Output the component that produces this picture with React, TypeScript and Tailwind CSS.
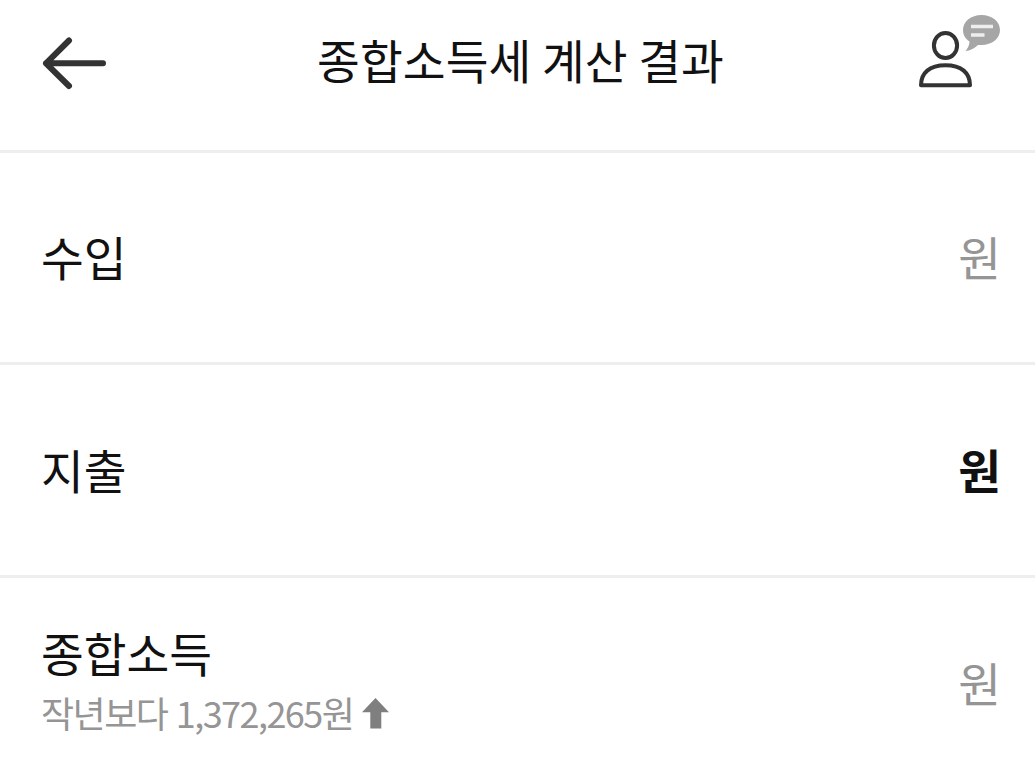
const BackIcon = () => (
  <svg width="66" height="54" viewBox="0 0 66 54" fill="none">
    <path
      d="M28 4.500L5 27.300L28 50M5 27.300H62"
      stroke="#333333"
      strokeWidth="6"
      strokeLinecap="round"
      strokeLinejoin="round"
    />
  </svg>
);

const ConsultIcon = () => (
  <svg width="84" height="76" viewBox="0 0 84 76" fill="none">
    <ellipse
      cx="29.500"
      cy="31.500"
      rx="11.600"
      ry="12.500"
      stroke="#333333"
      strokeWidth="4"
    />
    <path
      d="M5 71.300C5 59 13.500 51.200 29.500 51.200S54 59 54 71.300Z"
      stroke="#333333"
      strokeWidth="4"
      strokeLinejoin="round"
    />
    <path
      d="M65.500 1C76 1 84 7.500 84 16S76 31 65.500 31L62 31C58 34.500 54 37 49.500 37C51.500 34.500 53.500 31.500 53.500 27.500C49.500 25 47 21 47 16C47 7.500 55 1 65.500 1Z"
      fill="#a6a6a6"
    />
    <path d="M55 12.500H77M55 21H68.500" stroke="#eeeeee" strokeWidth="3.300" />
  </svg>
);

const UpIcon = () => (
  <svg width="27" height="31" viewBox="0 0 27 31" fill="#7f7f7f">
    <path d="M13.500 0L27 14.300H19.300V30.500H8.300V14.300H0Z" />
  </svg>
);

type Row = {
  label: string;
  amountClass: string;
  rowClass: string;
};

const rows: Row[] = [
  { label: "수입", amountClass: "text-[#959595]", rowClass: "h-[212px] pb-[4px]" },
  {
    label: "지출",
    amountClass: "font-bold text-[#111111]",
    rowClass: "h-[213px] pb-[3px]",
  },
];

export default function App() {
  return (
    <div className="flex h-[757px] w-[1035px] flex-col overflow-hidden bg-white font-['Noto_Sans_CJK_KR','Noto_Sans_CJK_SC',sans-serif] text-[46.5px] leading-[66px] text-[#111111]">
      <header className="grid h-[153px] shrink-0 grid-cols-[1fr_auto_1fr] border-b-3 border-[#eeeeee] pr-[35px] pl-[41px]">
        <button type="button" className="mt-[36px] self-start" aria-label="뒤로">
          <BackIcon />
        </button>
        <h1 className="mt-[26px] tracking-[0.1px]">종합소득세 계산 결과</h1>
        <button
          type="button"
          className="mt-[14px] self-start justify-self-end"
          aria-label="상담"
        >
          <ConsultIcon />
        </button>
      </header>

      {rows.map((row) => (
        <section
          key={row.label}
          className={`flex shrink-0 items-center justify-between border-b-3 border-[#eeeeee] pr-[34px] pl-[41px] ${row.rowClass}`}
        >
          <span>{row.label}</span>
          <span className={row.amountClass}>원</span>
        </section>
      ))}

      <section className="flex h-[179px] shrink-0 justify-between pt-[41px] pr-[34px] pl-[41px]">
        <div>
          <p>종합소득</p>
          <div className="flex items-start gap-[9px] text-[36px] leading-[54px] tracking-[-1.55px] text-[#959595] [word-spacing:2px]">
            <span>작년보다 1,372,265원</span>
            <span className="mt-[13px]">
              <UpIcon />
            </span>
          </div>
        </div>
        <span className="mt-[30px] text-[#959595]">원</span>
      </section>
    </div>
  );
}
